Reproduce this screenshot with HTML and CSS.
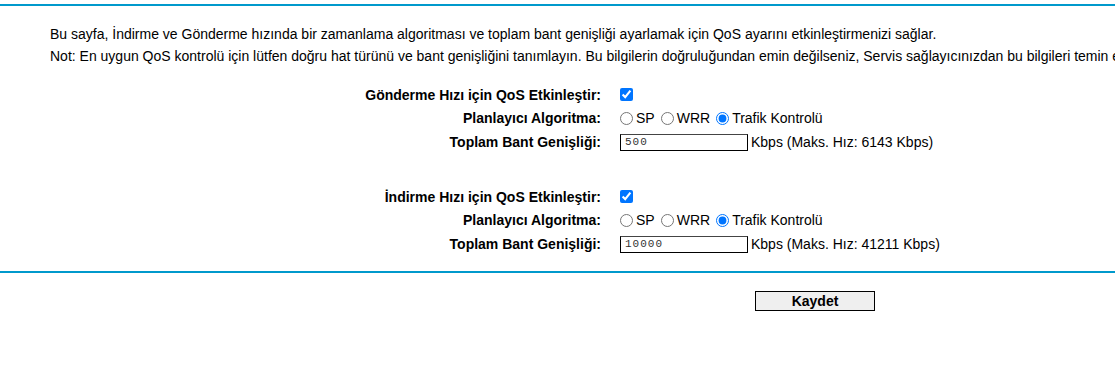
FILE: index.html
```html
<!DOCTYPE html>
<html>
<head>
<meta charset="utf-8">
<link rel="stylesheet" href="styles.css">
</head>
<body>
<div class="rule top"></div>
<div class="intro">
  <p>Bu sayfa, İndirme ve Gönderme hızında bir zamanlama algoritması ve toplam bant genişliği ayarlamak için QoS ayarını etkinleştirmenizi sağlar.</p>
  <p>Not: En uygun QoS kontrolü için lütfen doğru hat türünü ve bant genişliğini tanımlayın. Bu bilgilerin doğruluğundan emin değilseniz, Servis sağlayıcınızdan bu bilgileri temin edin.</p>
</div>
<div class="form">
  <div class="label">Gönderme Hızı için QoS Etkinleştir:</div>
  <div class="ctrl"><input type="checkbox" checked></div>
  <div class="label">Planlayıcı Algoritma:</div>
  <div class="ctrl">
    <label><input type="radio" name="up">SP</label>
    <label><input type="radio" name="up">WRR</label>
    <label><input type="radio" name="up" checked>Trafik Kontrolü</label>
  </div>
  <div class="label">Toplam Bant Genişliği:</div>
  <div class="ctrl"><input class="num" type="text" value="500">Kbps (Maks. Hız: 6143 Kbps)</div>
  <div class="spacer"></div>
  <div class="label">İndirme Hızı için QoS Etkinleştir:</div>
  <div class="ctrl"><input type="checkbox" checked></div>
  <div class="label">Planlayıcı Algoritma:</div>
  <div class="ctrl">
    <label><input type="radio" name="down">SP</label>
    <label><input type="radio" name="down">WRR</label>
    <label><input type="radio" name="down" checked>Trafik Kontrolü</label>
  </div>
  <div class="label">Toplam Bant Genişliği:</div>
  <div class="ctrl"><input class="num" type="text" value="10000">Kbps (Maks. Hız: 41211 Kbps)</div>
</div>
<div class="rule bottom"></div>
<div class="actions"><button class="save">Kaydet</button></div>
</body>
</html>
```
FILE: styles.css
```css
html, body {
  margin: 0;
  padding: 0;
  background: #fff;
}
body {
  font-family: "Liberation Sans", Arial, sans-serif;
  font-size: 14px;
  color: #000;
  overflow: hidden;
}
.rule {
  height: 2px;
  background: #0099cc;
}
.rule.top {
  margin-top: 4px;
}
.intro {
  padding: 17px 0 0 50px;
  white-space: nowrap;
}
.intro p {
  margin: 0;
  line-height: 22px;
}
.form {
  display: grid;
  grid-template-columns: 601px auto;
  grid-template-rows: 23px 24px 24px 31px 23px 24px 24px;
  column-gap: 19px;
  margin-top: 16px;
  white-space: nowrap;
}
.label {
  font-weight: bold;
  text-align: right;
  display: flex;
  align-items: center;
  justify-content: flex-end;
}
.ctrl {
  display: flex;
  align-items: center;
}
.ctrl label {
  display: flex;
  align-items: center;
  margin-right: 6px;
}
.ctrl input[type=checkbox] {
  margin: 0;
  width: 13px;
  height: 13px;
}
.ctrl input[type=radio] {
  margin: 0 3px 0 0;
  width: 13px;
  height: 13px;
}
.num {
  width: 128px;
  height: 17px;
  box-sizing: border-box;
  border: 1px solid #000;
  border-top-color: #444;
  padding: 0 4px;
  margin: 0 3px 0 0;
  font-family: "Liberation Mono", "Courier New", monospace;
  font-size: 11px;
  letter-spacing: 1px;
  color: #333;
}
.spacer {
  grid-column: 1 / 3;
}
.rule.bottom {
  margin-top: 15px;
}
.actions {
  display: flex;
  padding: 18px 0 0 755px;
}
.save {
  width: 120px;
  height: 20px;
  box-sizing: border-box;
  border: 1px solid #000;
  background: #efefef;
  font-family: "Liberation Sans", Arial, sans-serif;
  font-weight: bold;
  font-size: 14px;
  line-height: 18px;
  padding: 0;
  color: #000;
}
```
